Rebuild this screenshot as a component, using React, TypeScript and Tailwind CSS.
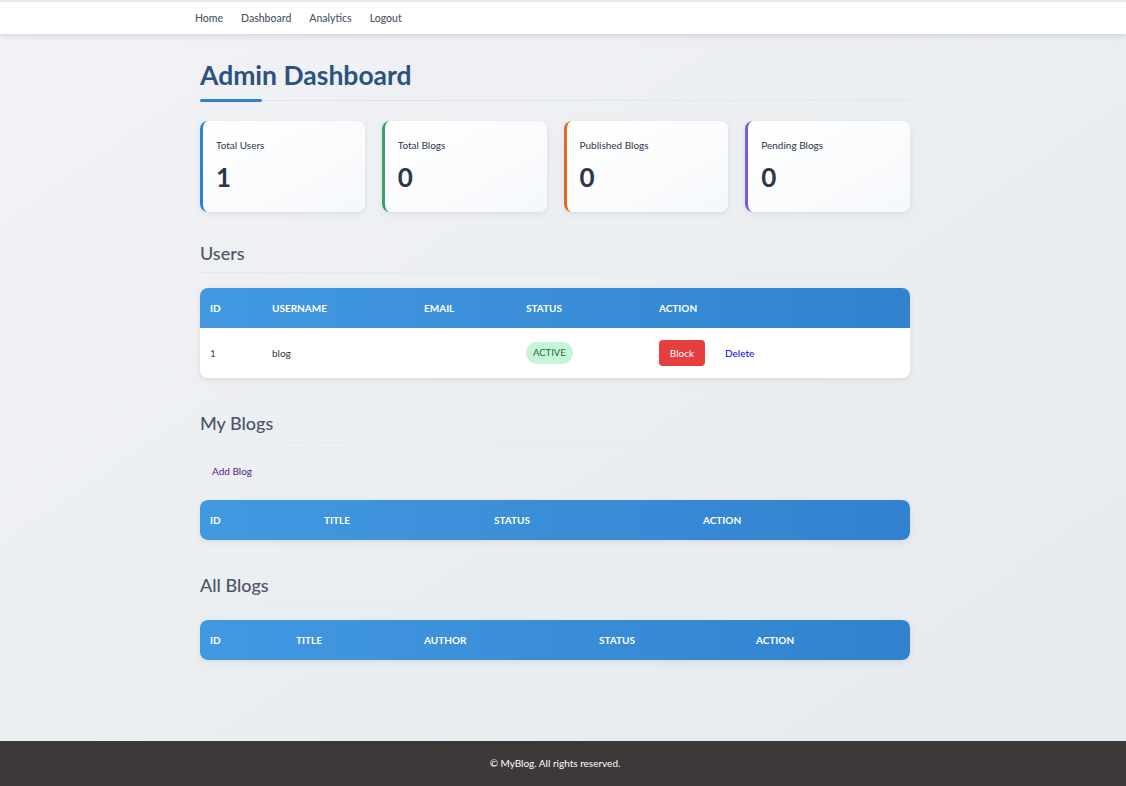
import React from 'react';

const font = { fontFamily: 'Lato, "Noto Sans", sans-serif' };

const stats = [
    { label: 'Total Users', value: 1, border: 'border-[#3182ce]' },
    { label: 'Total Blogs', value: 0, border: 'border-[#38a169]' },
    { label: 'Published Blogs', value: 0, border: 'border-[#dd6b20]' },
    { label: 'Pending Blogs', value: 0, border: 'border-[#805ad5]' },
];

const SectionTitle: React.FC<{ children: React.ReactNode; className?: string }> = ({ children, className }) => (
    <h2 className={`text-[18px] leading-[24px] font-medium text-[#4a5568] pb-[7px] border-b border-[#e6eaf0] ${className ?? ''}`}>
        {children}
    </h2>
);

const HeaderRow: React.FC<{ cols: { name: string; w: string }[] }> = ({ cols }) => (
    <div className="flex h-[40px] items-center bg-gradient-to-r from-[#4299e1] to-[#3182ce] text-white text-[10px] font-bold uppercase">
        {cols.map((c) => (
            <div key={c.name} className={`${c.w} pl-[10px]`}>{c.name}</div>
        ))}
    </div>
);

export default function App() {
    const userCols = [
        { name: 'ID', w: 'w-[62px]' },
        { name: 'Username', w: 'w-[152px]' },
        { name: 'Email', w: 'w-[102px]' },
        { name: 'Status', w: 'w-[133px]' },
        { name: 'Action', w: 'flex-1' },
    ];
    const myCols = [
        { name: 'ID', w: 'w-[114px]' },
        { name: 'Title', w: 'w-[170px]' },
        { name: 'Status', w: 'w-[209px]' },
        { name: 'Action', w: 'flex-1' },
    ];
    const allCols = [
        { name: 'ID', w: 'w-[86px]' },
        { name: 'Title', w: 'w-[128px]' },
        { name: 'Author', w: 'w-[175px]' },
        { name: 'Status', w: 'w-[157px]' },
        { name: 'Action', w: 'flex-1' },
    ];

    return (
        <div style={font} className="min-h-screen flex flex-col bg-gradient-to-br from-[#f1f3f6] to-[#e6e9ed]">
            <nav className="bg-white border-t-2 border-[#e5e7eb] shadow-[0_2px_6px_rgba(0,0,0,0.12)] h-[34px]">
                <div className="pr-4">
                    <div className="mx-auto w-[720px] h-[33px] flex items-center gap-[18px] text-[10.5px] font-medium text-[#4a5568]">
                        <span>Home</span>
                        <span>Dashboard</span>
                        <span>Analytics</span>
                        <span>Logout</span>
                    </div>
                </div>
            </nav>

            <main className="flex-1 pr-4">
                <div className="mx-auto w-[710px] pt-[25px] pb-[60px]">
                    <h1 className="relative text-[26.5px] leading-[32px] font-bold text-[#2c5282] pb-[9px] border-b border-[#e2e6ec]">
                        Admin Dashboard
                        <span className="absolute left-0 bottom-[-2px] w-[62px] h-[3px] bg-[#3182ce] rounded-sm" />
                    </h1>

                    <div className="grid grid-cols-4 gap-[17px] mt-[20px]">
                        {stats.map((s) => (
                            <div
                                key={s.label}
                                className={`h-[91px] rounded-lg border-l-[3px] ${s.border} bg-gradient-to-br from-white to-[#f5f8fb] shadow-[0_2px_6px_rgba(0,0,0,0.08)] pl-[13px] pt-[17px]`}
                            >
                                <div className="text-[10px] leading-[14px] text-[#2d3748]">{s.label}</div>
                                <div className="mt-[9px] text-[26px] leading-[32px] font-bold text-[#2d3748]">{s.value}</div>
                            </div>
                        ))}
                    </div>

                    <SectionTitle className="mt-[29px]">Users</SectionTitle>
                    <div className="mt-[15px] rounded-lg overflow-hidden bg-white shadow-[0_2px_6px_rgba(0,0,0,0.08)]">
                        <HeaderRow cols={userCols} />
                        <div className="flex h-[50px] items-center text-[10px] text-[#2d3748]">
                            <div className="w-[62px] pl-[10px] text-[#744210]">1</div>
                            <div className="w-[152px] pl-[10px]">blog</div>
                            <div className="w-[102px] pl-[10px]"></div>
                            <div className="w-[133px] pl-[10px]">
                                <span className="inline-flex items-center h-[22px] px-[7px] rounded-full bg-[#c6f6d5] text-[#276749] text-[9.5px]">ACTIVE</span>
                            </div>
                            <div className="flex-1 pl-[10px] flex items-center">
                                <button className="h-[26px] w-[46px] rounded-[4px] bg-[#e53e3e] text-white text-[10px]">Block</button>
                                <span className="ml-[20px] text-[#0000ee]">Delete</span>
                            </div>
                        </div>
                    </div>

                    <SectionTitle className="mt-[33px]">My Blogs</SectionTitle>
                    <div className="mt-[13px] px-3 py-2 text-[10px] leading-[14px] text-[#551a8b]">Add Blog</div>
                    <div className="mt-[14px] rounded-lg overflow-hidden shadow-[0_2px_6px_rgba(0,0,0,0.08)]">
                        <HeaderRow cols={myCols} />
                    </div>

                    <SectionTitle className="mt-[33px]">All Blogs</SectionTitle>
                    <div className="mt-[15px] rounded-lg overflow-hidden shadow-[0_2px_6px_rgba(0,0,0,0.08)]">
                        <HeaderRow cols={allCols} />
                    </div>
                </div>
            </main>

            <footer className="h-[45px] bg-[#3d3938] flex items-center justify-center pr-4 text-white text-[10px]">
                © MyBlog. All rights reserved.
            </footer>
        </div>
    );
}
